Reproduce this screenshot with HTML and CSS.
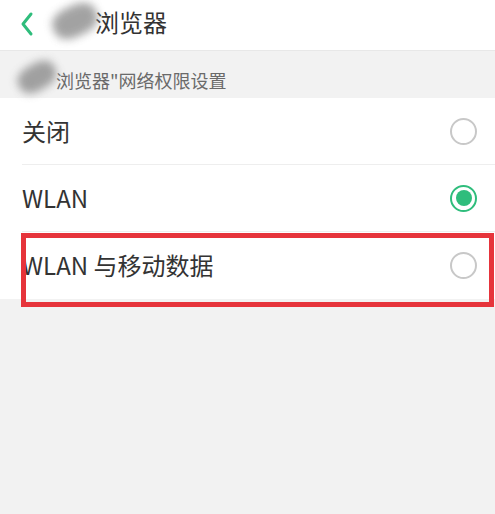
FILE: index.html
```html
<!DOCTYPE html>
<html>
<head>
	<meta charset="utf-8" />
	<link rel="stylesheet" href="styles.css">
</head>
<body>

<div class="header">
	<svg class="back" width="20" height="30" viewBox="0 0 20 30">
		<polyline points="11,7 3,17 11,27" fill="none" stroke="#2fbd7c" stroke-width="3" stroke-linecap="round" stroke-linejoin="round" />
	</svg>
	<span class="smudge smudge-title"></span>
	<span class="title">浏览器</span>
</div>

<div class="section">
	<span class="smudge smudge-section"></span>
	<span class="section-text">浏览器"网络权限设置</span>
</div>

<div class="list">
	<div class="row">
		<span class="label">关闭</span>
		<span class="radio"></span>
	</div>
	<div class="row">
		<span class="label">WLAN</span>
		<span class="radio checked"></span>
	</div>
	<div class="row last">
		<span class="label">WLAN 与移动数据</span>
		<span class="radio"></span>
		<!-- highlight box -->
		<div class="mark"></div>
	</div>
</div>

</body>
</html>
```

FILE: styles.css
```css
body {
	margin: 0;
	padding: 0;
	background: #f2f2f2;
	font-family: "Noto Sans CJK SC", "Noto Sans", sans-serif;
	color: #333333;
	width: 495px;
	height: 514px;
	overflow: hidden;
}

.header {
	height: 51px;
	box-sizing: border-box;
	background: #ffffff;
	border-bottom: 1px solid #e8e8e8;
	display: flex;
	align-items: center;
	position: relative;
}
.header .back {
	margin-left: 20px;
	margin-top: -6px;
}
.header .title {
	margin-left: 55px;
	margin-top: -8px;
	font-size: 24px;
	color: #333333;
}

/* scribbled-out app name */
.smudge {
	position: absolute;
	background: #8c8c8c;
	border-radius: 40%;
	filter: blur(4px);
	opacity: 0.8;
}
.smudge-title {
	left: 52px;
	top: 6px;
	width: 46px;
	height: 30px;
	transform: rotate(-25deg);
}
.smudge-section {
	left: 17px;
	top: 64px;
	width: 40px;
	height: 26px;
	transform: rotate(-30deg);
}

.section {
	height: 47px;
	display: flex;
	align-items: flex-end;
	padding-left: 56px;
	padding-bottom: 5px;
	box-sizing: border-box;
}
.section-text {
	font-size: 18px;
	color: #6a6a6a;
}

.list {
	background: #ffffff;
}
.row {
	height: 67px;
	margin-left: 22px;
	padding-right: 18px;
	display: flex;
	align-items: center;
	justify-content: space-between;
	border-bottom: 1px solid #eeeeee;
	box-sizing: border-box;
	position: relative;
}
.row.last {
	border-bottom: none;
}
.row .label {
	font-size: 24px;
	color: #333333;
	margin-top: -2px;
}

.radio {
	width: 27px;
	height: 27px;
	box-sizing: border-box;
	border: 2px solid #c8c8c8;
	border-radius: 50%;
	position: relative;
}
.radio.checked {
	border-color: #2fbd7c;
}
.radio.checked::after {
	content: "";
	position: absolute;
	left: 3.5px;
	top: 3.5px;
	width: 16px;
	height: 16px;
	border-radius: 50%;
	background: #2fbd7c;
}

.mark {
	position: absolute;
	left: -1px;
	right: 1px;
	top: 1px;
	height: 74px;
	box-sizing: border-box;
	border: 5px solid #e6343b;
}
```
